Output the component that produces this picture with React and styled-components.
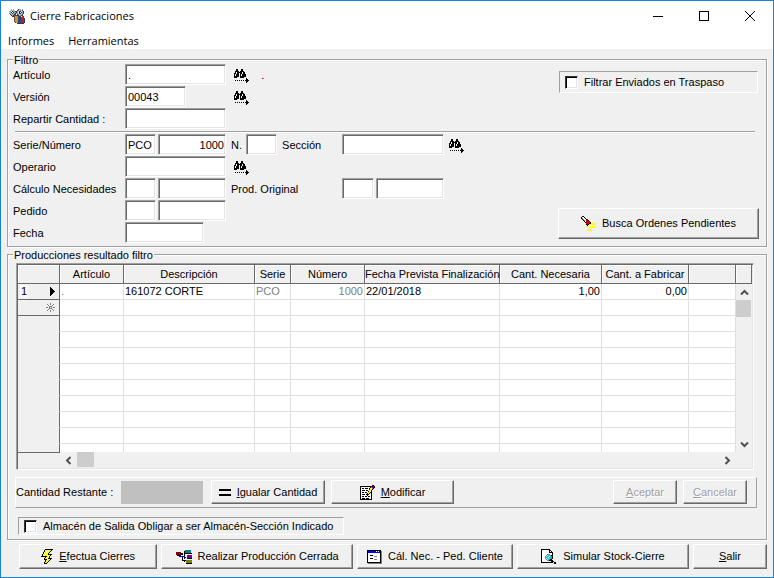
import React from "react";
import styled, { createGlobalStyle, css } from "styled-components";

const face = "#f0f0f0";
const shade = "#a0a0a0";
const dark = "#696969";
const light = "#e3e3e3";

const GlobalStyle = createGlobalStyle`
  * { box-sizing: border-box; }
  html, body { margin: 0; background: ${face}; }
  body, button, input {
    font-family: "Liberation Sans", Arial, sans-serif;
    font-size: 11px;
    line-height: 13px;
    color: #000;
  }
`;

const Window = styled.div`
  display: flex;
  flex-direction: column;
  min-height: 100vh;
  border: 1px solid #1883d7;
  background: ${face};
`;

const TitleBar = styled.header`
  display: flex;
  align-items: center;
  height: 30px;
  padding-left: 8px;
  background: #fff;
`;

const Title = styled.h1`
  flex: 1;
  margin: 0 0 0 5px;
  font: 11px/16px "Open Sans", "Noto Sans", sans-serif;
`;

const CaptionButton = styled.button`
  display: flex;
  align-items: center;
  justify-content: center;
  width: 46px;
  height: 30px;
  padding: 0;
  border: 0;
  background: none;
`;

const MenuBar = styled.nav`
  display: flex;
  gap: 14px;
  height: 18px;
  padding-left: 7px;
  background: #fff;
`;

const MenuItem = styled.button`
  padding: 0;
  border: 0;
  background: none;
  font: 11px/20px "Open Sans", "Noto Sans", sans-serif;
`;

const Body = styled.main`
  padding: 6px 6px 0;
`;

const Group = styled.fieldset`
  min-width: 0;
  margin: 0 0 3px;
  padding: ${(p) => p.$pad};
  border: 1px solid ${shade};
  box-shadow: 1px 1px 0 #fff, inset 1px 1px 0 #fff;
`;

const Legend = styled.legend`
  height: 9px;
  margin-left: ${(p) => p.$indent};
  padding: 0 1px;
  line-height: 11px;
  background: ${face};
`;

const Section = styled.div`
  display: flex;
  justify-content: space-between;
  align-items: ${(p) => p.$align};
`;

const Row = styled.div`
  display: grid;
  grid-template-columns: 112px 106px 111px auto;
  align-items: start;
  height: 22px;
`;

const Cells = styled.div`
  display: flex;
  align-items: flex-start;
  gap: 2px;
`;

const Label = styled.label`
  width: ${(p) => p.$width};
  line-height: 22px;
  white-space: nowrap;
`;

const Field = styled.input`
  width: ${(p) => p.$width}px;
  height: 21px;
  padding: 0 1px 0 2px;
  border: 1px solid;
  border-color: ${shade} #fff #fff ${shade};
  border-radius: 0;
  outline: 0;
  background: #fff;
  box-shadow: inset 1px 1px 0 ${dark}, inset -1px -1px 0 ${light};
  text-align: ${(p) => (p.$right ? "right" : "left")};
`;

const Divider = styled.hr`
  height: 2px;
  margin: 1px 11px 1px 2px;
  border: 0;
  border-top: 1px solid ${shade};
  border-bottom: 1px solid #fff;
`;

const LookupButton = styled.button`
  display: flex;
  padding: 5px 1px 0 3px;
  border: 0;
  background: none;
`;

const PushButton = styled.button`
  display: flex;
  flex: ${(p) => p.$flex || "none"};
  align-items: center;
  justify-content: center;
  gap: 6px;
  width: ${(p) => p.$width}px;
  height: ${(p) => p.$height || 24}px;
  padding: 0;
  border: 1px solid;
  border-color: #fff ${dark} ${dark} #fff;
  background: ${face};
  box-shadow: inset -1px -1px 0 ${shade};
  white-space: nowrap;
  ${(p) =>
    p.disabled &&
    css`
      color: ${shade};
      text-shadow: 1px 1px 0 #fff;
    `}
`;

const CheckPanel = styled.label`
  display: flex;
  align-items: center;
  gap: 6px;
  width: ${(p) => p.$width}px;
  height: ${(p) => p.$height}px;
  margin: ${(p) => p.$margin};
  padding-left: 5px;
  border: 1px solid;
  border-color: ${shade} #fff #fff ${shade};
`;

const CheckBox = styled.input.attrs({ type: "checkbox" })`
  appearance: none;
  width: 13px;
  height: 13px;
  margin: 0;
  border: 1px solid;
  border-color: #333 #fff #fff #333;
  background: #fff;
  box-shadow: inset 1px 1px 0 #000, inset -1px -1px 0 ${light};
  &:checked {
    background: #000;
  }
`;

const SearchArea = styled.div`
  padding: 0 7px 5px 0;
`;

const GridFrame = styled.div`
  display: grid;
  grid-template-columns: minmax(0, 1fr) 16px;
  grid-template-rows: 187px 16px;
  margin-right: 3px;
  border: 1px solid;
  border-color: ${shade} #fff #fff ${shade};
  box-shadow: inset 1px 1px 0 ${dark}, inset -1px -1px 0 ${light};
  padding: 1px;
`;

const TableClip = styled.div`
  overflow: hidden;
`;

const Table = styled.table`
  width: 100%;
  table-layout: fixed;
  border-collapse: separate;
  border-spacing: 0;
  background: #fff;
`;

const Col = styled.col`
  width: ${(p) => (p.$width ? p.$width + "px" : "auto")};
`;

const HeadCell = styled.th`
  height: 19px;
  padding: 0;
  border-right: 1px solid ${dark};
  border-bottom: 1px solid ${dark};
  background: ${face};
  box-shadow: inset 1px 1px 0 #fff;
  font-weight: normal;
  white-space: nowrap;
`;

const RowHead = styled.th`
  height: 16px;
  padding: 0 4px 0 2px;
  border-right: 1px solid ${dark};
  border-bottom: 1px solid ${(p) => (p.$ruled ? dark : face)};
  background: ${face};
  font-weight: normal;
`;

const RowMark = styled.div`
  display: flex;
  align-items: center;
  justify-content: space-between;
  height: 15px;
`;

const RowNumber = styled.span`
  padding: 0 1px;
  background: #fafafa;
`;

const Cell = styled.td`
  height: 16px;
  padding: 0 1px;
  border-right: 1px solid #dfdfdf;
  border-bottom: 1px solid #dfdfdf;
  color: ${(p) => (p.$muted ? "#808080" : "#000")};
  text-align: ${(p) => (p.$right ? "right" : "left")};
  white-space: nowrap;
`;

const VerticalBar = styled.div`
  display: flex;
  flex-direction: column;
`;

const BarCorner = styled.div`
  height: 19px;
  border-right: 1px solid ${dark};
  border-bottom: 1px solid ${dark};
  box-shadow: inset 1px 1px 0 #fff;
`;

const BarFoot = styled.div`
  width: 42px;
  border-top: 1px solid ${dark};
`;

const HorizontalBar = styled.div`
  display: flex;
`;

const ArrowButton = styled.button`
  display: flex;
  align-items: center;
  justify-content: center;
  width: 17px;
  height: 16px;
  padding: 0;
  border: 0;
  background: none;
`;

const Track = styled.div`
  flex: 1;
`;

const Thumb = styled.div`
  width: ${(p) => p.$width}px;
  height: ${(p) => p.$height}px;
  background: #cdcdcd;
`;

const EditPanel = styled.div`
  display: flex;
  align-items: center;
  height: 31px;
  margin: 7px 0 9px -1px;
  padding: 0 9px 1px 0;
  border: 1px solid;
  border-color: #fff ${shade} ${shade} #fff;
`;

const Remaining = styled.output`
  width: 82px;
  height: 23px;
  margin-right: 8px;
  background: #c0c0c0;
`;

const PanelButtons = styled.div`
  display: flex;
  gap: 6px;
  margin-left: ${(p) => (p.$end ? "auto" : 0)};
`;

const Actions = styled.div`
  display: flex;
  gap: 4px;
  padding: 1px 0 7px 12px;
`;

/* Bitmap icons: one character per pixel, looked up in a palette. */
const palette = {
  "#": "#000000",
  w: "#ffffff",
  r: "#c00000",
  m: "#800000",
  y: "#ffff00",
  o: "#808000",
  b: "#0000ff",
  n: "#1c4f80",
  t: "#008080",
  c: "#00e0f0",
  p: "#800080",
  g: "#808080",
  s: "#8fa3b0",
  l: "#c6d0d6",
  k: "#2c3a44",
  a: "#c8913a",
  d: "#7a4a28",
  e: "#c01c38",
};

function Bitmap({ rows }) {
  const width = Math.max(...rows.map((r) => r.length));
  const rects = [];
  rows.forEach((row, y) => {
    let x = 0;
    while (x < row.length) {
      let end = x + 1;
      while (end < row.length && row[end] === row[x]) end++;
      if (palette[row[x]]) {
        rects.push(
          <rect key={`${x}-${y}`} x={x} y={y} width={end - x} height={1} fill={palette[row[x]]} />
        );
      }
      x = end;
    }
  });
  return (
    <svg
      width={width}
      height={rows.length}
      viewBox={`0 0 ${width} ${rows.length}`}
      shapeRendering="crispEdges"
      aria-hidden="true"
    >
      {rects}
    </svg>
  );
}

const appIcon = [
  "................",
  "..s.s....kss.s..",
  ".lslsl..kslslk..",
  "sslksskkslkklsk.",
  "lsk.ksskslkwksk.",
  "sslkssksslkklsk.",
  ".kslskk.kslslk..",
  "..kskdddkksskk..",
  "...kkdaaannk.ee.",
  ".....daaannkeee.",
  ".....daaannkeeek",
  ".....daaannneeek",
  ".....daaannneeek",
  ".....daaannneeek",
  "......kaannneeek",
  "........kkkkkkk.",
];

const binoculars = [
  "..##...##......",
  "..##...##......",
  ".####.####.....",
  ".#.#####.##....",
  "##.##.##.##....",
  "#.###.#.####...",
  "#.###.#.####...",
  "#####.######...",
  "###...####.....",
  "............#..",
  "............##.",
  ".#.#.#.#.#.####",
  "............##.",
  "............#..",
];

const flashlight = [
  ".##............",
  "#ww#...........",
  "#gww#..........",
  ".#gww#r........",
  "..#gwrrr.......",
  "...#wrrrr......",
  "....#rrrr#.....",
  ".....rrr##yy.yy",
  ".....#r#yy.y.yy",
  "......#........",
  ".....yy.yy.y.yy",
  "......y.yy.y.yy",
  "...............",
  "......yy.yy.y..",
  "......yy.yy....",
];

const equals = [
  "############",
  "############",
  "............",
  "............",
  "............",
  "############",
  "############",
];

const notes = [
  "............##.",
  "###########ppp#",
  "#wwwwwwwww#gpp#",
  "#w##w###w#yyg#.",
  "#wwwwwwww#yy#..",
  "#w###w##wyy#...",
  "#wwwwwww#yy#...",
  "#w##w##wyy##...",
  "#wwwwww#y#w#...",
  "#w###w###ww#...",
  "#wwwwww#www#...",
  "#w##w##w##w#...",
  "#wwwwwwwwww#...",
  "#w###w###ww#...",
  "############...",
];

const lightning = [
  "....########",
  "...#yywyyy#.",
  "...#ywyyy#..",
  "..#yywyy#...",
  "..#ywyy#....",
  ".#yywyy####.",
  ".#ywyyyyw#..",
  "######yw#...",
  "....#yyy#...",
  "...#yyw####.",
  "...###yyy#..",
  "....#yyy#...",
  "....#yy#....",
  "...#yy#.....",
  "...###......",
];

const hierarchy = [
  ".........tttttt.",
  "........#tttttt.",
  "mmmmm...#tttttt.",
  "mmmmm##.########",
  "mmmmm##.#.......",
  ".####...#..ppppp",
  "...bbbbbb..ppppp",
  "......#.##.ppppp",
  "......#.#..#####",
  "......#.........",
  "......####oooooo",
  "........#.oooooo",
  "..........oooooo",
  "..........######",
];

const dialogBox = [
  "##############.",
  "#bbbbbbbbwbwb#g",
  "#bbbbbbbbbbbb#g",
  "#wwwwwwwwwwww#g",
  "#wwwwwwwwwwww#g",
  "#ww###wwwwwww#g",
  "#wwwwwwgggwww#g",
  "#wwwwwwwwwwww#g",
  "#ww###wwwwwww#g",
  "#wwwwwwgggwww#g",
  "#wwwwwwwwwwww#g",
  "#wwwwwwwwwwww#g",
  "##############g",
  ".gggggggggggggg",
];

const preview = [
  "#########.......",
  "#wwwwwww##......",
  "#wwwwwww#w#.....",
  "#wwwwwww####....",
  "#wwwwwwwwww#....",
  "#wwwwwgggww#....",
  "#wwwwglccg##....",
  "#wwwglccwcg#....",
  "#wwwgccwccg#....",
  "#wwwglcccgg#....",
  "#wwwwglcg##.....",
  "#wwwwwgg####....",
  "#wwwwwwwww###...",
  "############.##.",
  ".............##.",
];

const newRow = [
  "....g....",
  ".g..g..g.",
  "..g...g..",
  "...ggg...",
  "gg.g.g.gg",
  "...ggg...",
  "..g...g..",
  ".g..g..g.",
  "....g....",
];

const currentRow = ["#....", "##...", "###..", "####.", "#####", "####.", "###..", "##...", "#...."];

function Chevron({ d }) {
  return (
    <svg width="9" height="9" viewBox="0 0 9 9" aria-hidden="true">
      <path d={d} fill="none" stroke="#505050" strokeWidth="2" />
    </svg>
  );
}

function Lookup({ name }) {
  return (
    <LookupButton type="button" aria-label={`Buscar ${name}`}>
      <Bitmap rows={binoculars} />
    </LookupButton>
  );
}

const columns = [
  { title: "Artículo", width: 64 },
  { title: "Descripción", width: 131 },
  { title: "Serie", width: 36 },
  { title: "Número", width: 74 },
  { title: "Fecha Prevista Finalización", width: 135 },
  { title: "Cant. Necesaria", width: 102 },
  { title: "Cant. a Fabricar", width: 87 },
  { title: "" },
];

const record = [
  { text: ".", muted: true },
  { text: "161072 CORTE" },
  { text: "PCO", muted: true },
  { text: "1000", muted: true, right: true },
  { text: "22/01/2018" },
  { text: "1,00", right: true },
  { text: "0,00", right: true },
  { text: "" },
];

const emptyRows = Array.from({ length: 9 }, (_, i) => i);

function ResultTable() {
  return (
    <GridFrame>
      <TableClip>
        <Table>
          <colgroup>
            <Col $width={42} />
            {columns.map((c, i) => (
              <Col key={i} $width={c.width} />
            ))}
          </colgroup>
          <thead>
            <tr>
              <HeadCell />
              {columns.map((c, i) => (
                <HeadCell key={i} scope="col">{c.title}</HeadCell>
              ))}
            </tr>
          </thead>
          <tbody>
            <tr>
              <RowHead $ruled scope="row">
                <RowMark>
                  <RowNumber>1</RowNumber>
                  <Bitmap rows={currentRow} />
                </RowMark>
              </RowHead>
              {record.map((c, i) => (
                <Cell key={i} $muted={c.muted} $right={c.right}>{c.text}</Cell>
              ))}
            </tr>
            <tr>
              <RowHead $ruled>
                <RowMark>
                  <span />
                  <Bitmap rows={newRow} />
                </RowMark>
              </RowHead>
              {columns.map((_, i) => (
                <Cell key={i} />
              ))}
            </tr>
            {emptyRows.map((r) => (
              <tr key={r}>
                <RowHead />
                {columns.map((_, i) => (
                  <Cell key={i} />
                ))}
              </tr>
            ))}
          </tbody>
        </Table>
      </TableClip>
      <VerticalBar>
        <BarCorner />
        <ArrowButton type="button" aria-label="Subir"><Chevron d="M1 6.5 4.5 3 8 6.5" /></ArrowButton>
        <Thumb $width={15} $height={17} />
        <Track />
        <ArrowButton type="button" aria-label="Bajar"><Chevron d="M1 2.5 4.5 6 8 2.5" /></ArrowButton>
      </VerticalBar>
      <HorizontalBar>
        <BarFoot />
        <ArrowButton type="button" aria-label="Izquierda"><Chevron d="M6.5 1 3 4.5 6.5 8" /></ArrowButton>
        <Thumb $width={17} $height={15} />
        <Track />
        <ArrowButton type="button" aria-label="Derecha"><Chevron d="M2.5 1 6 4.5 2.5 8" /></ArrowButton>
      </HorizontalBar>
    </GridFrame>
  );
}

export default function App() {
  return (
    <>
      <GlobalStyle />
      <Window>
        <TitleBar>
          <Bitmap rows={appIcon} />
          <Title>Cierre Fabricaciones</Title>
          <CaptionButton type="button" aria-label="Minimizar">
            <svg width="10" height="11" shapeRendering="crispEdges"><path d="M0 5.5H10" stroke="#000" /></svg>
          </CaptionButton>
          <CaptionButton type="button" aria-label="Maximizar">
            <svg width="10" height="10" shapeRendering="crispEdges"><path d="M.5.5H9.5V9.5H.5Z" fill="none" stroke="#000" /></svg>
          </CaptionButton>
          <CaptionButton type="button" aria-label="Cerrar">
            <svg width="10" height="10"><path d="M0 0 10 10M10 0 0 10" stroke="#000" /></svg>
          </CaptionButton>
        </TitleBar>
        <MenuBar>
          <MenuItem type="button">Informes</MenuItem>
          <MenuItem type="button">Herramientas</MenuItem>
        </MenuBar>
        <Body>
          <Group $pad="0 0 2px 5px">
            <Legend $indent="0">Filtro</Legend>
            <Section $align="flex-start">
              <div>
                <Row>
                  <Label htmlFor="articulo">Artículo</Label>
                  <Field id="articulo" $width={101} defaultValue="." />
                  <Cells>
                    <Lookup name="artículo" />
                    <Label as="span">&nbsp;&nbsp;&nbsp;.</Label>
                  </Cells>
                </Row>
                <Row>
                  <Label htmlFor="version">Versión</Label>
                  <Field id="version" $width={61} defaultValue="00043" />
                  <Lookup name="versión" />
                </Row>
                <Row>
                  <Label htmlFor="repartir">Repartir Cantidad :</Label>
                  <Field id="repartir" $width={101} />
                </Row>
              </div>
              <CheckPanel $width={199} $height={22} $margin="7px 8px 0 0">
                <CheckBox />
                Filtrar Enviados en Traspaso
              </CheckPanel>
            </Section>
            <Divider />
            <Section $align="flex-end">
              <div>
                <Row>
                  <Label htmlFor="serie">Serie/Número</Label>
                  <Cells>
                    <Field id="serie" $width={31} defaultValue="PCO" />
                    <Field aria-label="Número" $width={68} $right defaultValue="1000" />
                  </Cells>
                  <Cells>
                    <Label htmlFor="n" $width="13px">N.</Label>
                    <Field id="n" $width={31} />
                    <Label htmlFor="seccion">&nbsp;Sección</Label>
                  </Cells>
                  <Cells>
                    <Field id="seccion" $width={102} />
                    <Lookup name="sección" />
                  </Cells>
                </Row>
                <Row>
                  <Label htmlFor="operario">Operario</Label>
                  <Field id="operario" $width={101} />
                  <Lookup name="operario" />
                </Row>
                <Row>
                  <Label htmlFor="calculo">Cálculo Necesidades</Label>
                  <Cells>
                    <Field id="calculo" $width={31} />
                    <Field aria-label="Número de cálculo" $width={68} />
                  </Cells>
                  <Label htmlFor="original">Prod. Original</Label>
                  <Cells>
                    <Field id="original" $width={32} />
                    <Field aria-label="Número de producción original" $width={68} />
                  </Cells>
                </Row>
                <Row>
                  <Label htmlFor="pedido">Pedido</Label>
                  <Cells>
                    <Field id="pedido" $width={31} />
                    <Field aria-label="Número de pedido" $width={68} />
                  </Cells>
                </Row>
                <Row>
                  <Label htmlFor="fecha">Fecha</Label>
                  <Field id="fecha" $width={79} />
                </Row>
              </div>
              <SearchArea>
                <PushButton type="button" $width={201} $height={31}>
                  <Bitmap rows={flashlight} />
                  Busca Ordenes Pendientes
                </PushButton>
              </SearchArea>
            </Section>
          </Group>

          <Group $pad="4px 9px 4px 8px">
            <Legend $indent="-3px">Producciones resultado filtro</Legend>
            <ResultTable />
            <EditPanel>
              <Label htmlFor="restante" $width="105px">Cantidad Restante :</Label>
              <Remaining id="restante" />
              <PanelButtons>
                <PushButton type="button" $width={114}>
                  <Bitmap rows={equals} />
                  <span><u>I</u>gualar Cantidad</span>
                </PushButton>
                <PushButton type="button" $width={123}>
                  <Bitmap rows={notes} />
                  <span><u>M</u>odificar</span>
                </PushButton>
              </PanelButtons>
              <PanelButtons $end>
                <PushButton type="button" disabled $width={64}>
                  <span><u>A</u>ceptar</span>
                </PushButton>
                <PushButton type="button" disabled $width={64}>
                  <span><u>C</u>ancelar</span>
                </PushButton>
              </PanelButtons>
            </EditPanel>
            <CheckPanel $width={326} $height={18} $margin="0 0 0 2px">
              <CheckBox />
              Almacén de Salida Obligar a ser Almacén-Sección Indicado
            </CheckPanel>
          </Group>

          <Actions>
            <PushButton type="button" $height={25} $flex="138 1 0">
              <Bitmap rows={lightning} />
              <span><u>E</u>fectua Cierres</span>
            </PushButton>
            <PushButton type="button" $height={25} $flex="192 1 0">
              <Bitmap rows={hierarchy} />
              Realizar Producción Cerrada
            </PushButton>
            <PushButton type="button" $height={25} $flex="156 1 0">
              <Bitmap rows={dialogBox} />
              Cál. Nec. - Ped. Cliente
            </PushButton>
            <PushButton type="button" $height={25} $flex="172 1 0">
              <Bitmap rows={preview} />
              Simular Stock-Cierre
            </PushButton>
            <PushButton type="button" $height={25} $flex="73 1 0">
              <span><u>S</u>alir</span>
            </PushButton>
          </Actions>
        </Body>
      </Window>
    </>
  );
}
